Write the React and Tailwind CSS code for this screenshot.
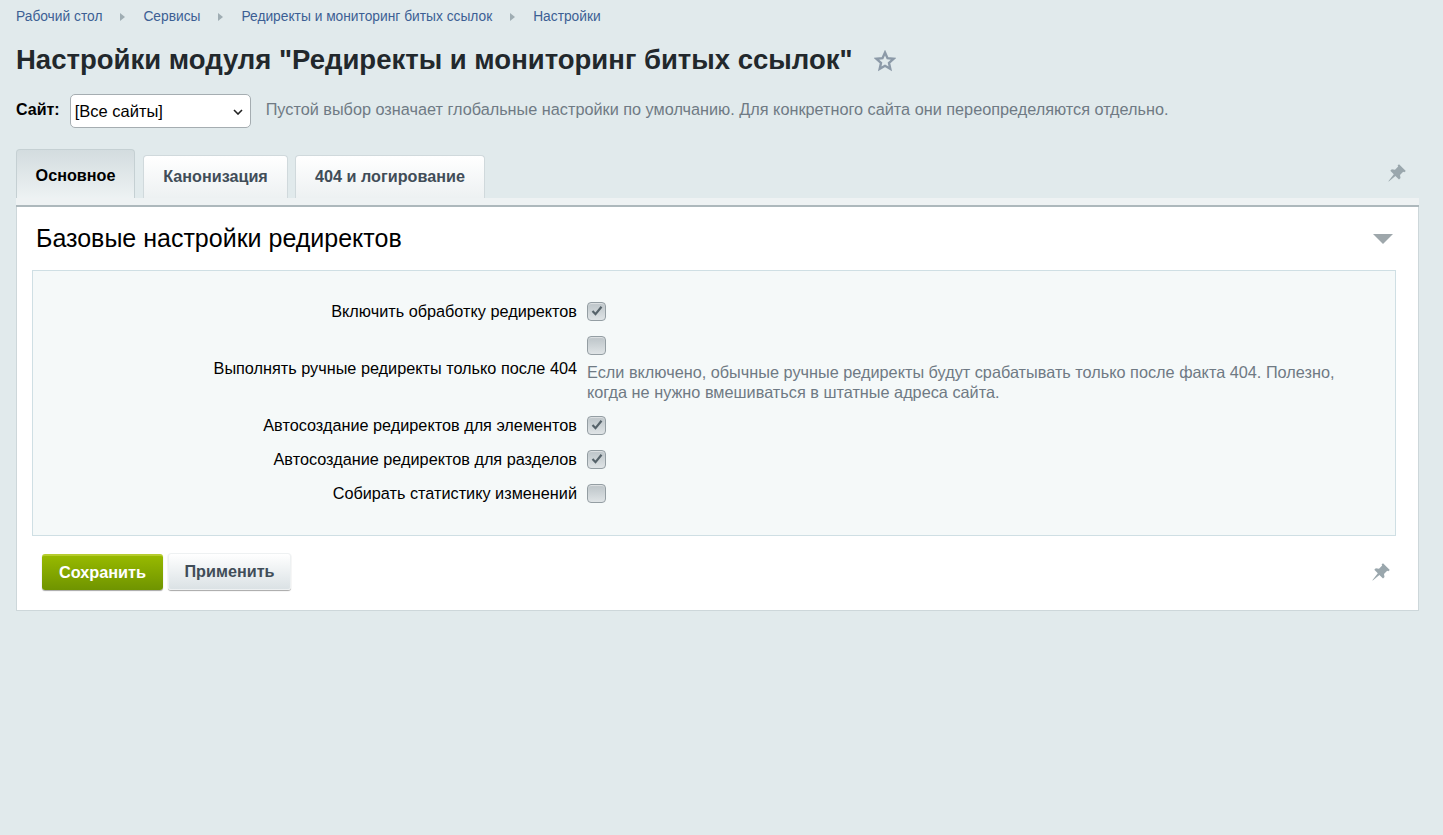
const FONT = "font-['Liberation_Sans',Arial,sans-serif]";

function Pin() {
  return (
    <svg width="20" height="20" viewBox="0 0 20 20" className="block">
      <path d="M12 1.2l6.8 6.8-1.5 1.3-1.1-.6-3.2 3.2.5 3.2-1.5 1.5-3.6-3.6L1.8 18.6l-.4-.4 5.4-7-3.5-3.5 1.5-1.5 3.2.5 3.2-3.2-.6-1.1z" fill="#9aa7ad" />
    </svg>
  );
}

function Checkbox({ checked }) {
  return (
    <span className="flex h-[19px] w-[19px] shrink-0 items-center justify-center rounded-[4px] border border-[#949ea3] bg-gradient-to-b from-[#bcc4c8] to-[#dfe4e6] shadow-[inset_0_1px_1px_rgba(255,255,255,0.5)]">
      {checked && (
        <svg width="14" height="14" viewBox="0 0 14 14">
          <path d="M2.5 7l3 3.2 6-7.4" fill="none" stroke="#56636a" strokeWidth="2.2" />
        </svg>
      )}
    </span>
  );
}

function Row({ label, checked, hint }) {
  return (
    <div className="flex items-center">
      <div className="w-[554px] pr-[10px] text-right text-[16.25px] leading-[18px] text-black">{label}</div>
      <div className="w-[770px] py-[7.5px]">
        <Checkbox checked={checked} />
        {hint && <div className="mt-[7px] -mb-[1px] text-[16.27px] leading-[20px] text-[#6f7a84]">{hint}</div>}
      </div>
    </div>
  );
}

function Tab({ active, width, children }) {
  if (active) {
    return (
      <div className={`flex h-[49px] items-center justify-center rounded-t-[4px] border border-b-0 border-[#c5d0d3] bg-gradient-to-b from-[#d3dcdf] to-[#edf2f3] pt-[2px] text-[16.2px] font-bold text-black ${width}`}>
        {children}
      </div>
    );
  }
  return (
    <div className={`flex h-[43px] items-center justify-center rounded-t-[4px] border border-b-0 border-[#d0d9dc] bg-gradient-to-b from-white to-[#edf1f2] pb-[1px] text-[16.2px] font-bold text-[#414d58] ${width}`}>
      {children}
    </div>
  );
}

export default function App() {
  const crumbs = ["Рабочий стол", "Сервисы", "Редиректы и мониторинг битых ссылок", "Настройки"];

  return (
    <div className={`${FONT} min-h-[835px] bg-[#e1eaec] pl-[16px] pr-[24px]`}>
      {/* breadcrumbs */}
      <div className="flex h-[33px] items-center pt-[1px] text-[13.77px] text-[#3c5f94]">
        {crumbs.map((c, i) => (
          <div key={c} className="flex items-center">
            {i > 0 && <span className="mx-[18px] h-0 w-0 border-y-[4px] border-l-[5px] border-y-transparent border-l-[#9fadb3]" />}
            <span>{c}</span>
          </div>
        ))}
      </div>

      {/* title */}
      <div className="mt-[8px] flex h-[38px] items-center">
        <h1 className="text-[27.5px] leading-[38px] font-bold text-[#22282c]">
          Настройки модуля "Редиректы и мониторинг битых ссылок"
        </h1>
        <svg width="22" height="22" viewBox="0 0 22 22" className="ml-[21px] mt-[2px]">
          <path d="M11 2.6l2.5 5.6 6.1.6-4.6 4.1 1.3 6-5.3-3.1-5.3 3.1 1.3-6-4.6-4.1 6.1-.6z" fill="none" stroke="#8c9aa8" strokeWidth="2.4" />
        </svg>
      </div>

      {/* site select */}
      <div className="mt-[15px] flex h-[34px] items-center">
        <span className="pb-[2px] text-[16px] font-bold text-black">Сайт:</span>
        <div className="relative ml-[10px] flex h-[34px] w-[181px] items-center rounded-[5px] border border-[#a5adb1] bg-white pl-[4px] text-[16.5px] text-black">
          [Все сайты]
          <svg width="10" height="6" viewBox="0 0 10 6" className="absolute right-[7px] top-[14px]">
            <path d="M1 1l4 4 4-4" fill="none" stroke="#222" strokeWidth="1.6" />
          </svg>
        </div>
        <span className="ml-[15px] pb-[3px] text-[16.25px] text-[#6f7a84]">
          Пустой выбор означает глобальные настройки по умолчанию. Для конкретного сайта они переопределяются отдельно.
        </span>
      </div>

      {/* tabs */}
      <div className="mt-[21px] flex items-end justify-between">
        <div className="flex items-end">
          <Tab active width="w-[119px]">Основное</Tab>
          <div className="w-[8px]" />
          <Tab width="w-[145px]">Канонизация</Tab>
          <div className="w-[7px]" />
          <Tab width="w-[190px]">404 и логирование</Tab>
        </div>
        <div className="mb-[15px] mr-[12px]"><Pin /></div>
      </div>

      <div className="h-[9px] border-b-2 border-[#adb8bc] bg-[#eef2f3]" />

      {/* panel */}
      <div className="border-x border-b border-[#cdd7da] bg-white pl-[15px] pr-[22px] pb-[20px]">
        <div className="flex h-[63px] items-center justify-between pl-[4px] pr-[3px]">
          <h2 className="text-[25px] font-normal text-black">Базовые настройки редиректов</h2>
          <span className="h-0 w-0 border-x-[10px] border-t-[10px] border-x-transparent border-t-[#9ea7ab]" />
        </div>

        <div className="border border-[#cfdfe4] bg-[#f5f9f9] pt-[23px] pb-[25px]">
          <Row label="Включить обработку редиректов" checked />
          <Row
            label="Выполнять ручные редиректы только после 404"
            hint={
              <>
                Если включено, обычные ручные редиректы будут срабатывать только после факта 404. Полезно,
                <br />
                когда не нужно вмешиваться в штатные адреса сайта.
              </>
            }
          />
          <Row label="Автосоздание редиректов для элементов" checked />
          <Row label="Автосоздание редиректов для разделов" checked />
          <Row label="Собирать статистику изменений" />
        </div>

        <div className="mt-[17px] flex items-center justify-between pl-[10px] pr-[5px]">
          <div className="flex items-center gap-[5px]">
            <button className="h-[36px] w-[121px] rounded-[3px] border-t-2 border-[#b6cc2e] bg-gradient-to-b from-[#97b900] to-[#6f9400] text-[16.3px] font-bold text-white shadow-[0_1px_1px_rgba(0,0,0,0.35)]">
              Сохранить
            </button>
            <button className="h-[37px] w-[123px] rounded-[3px] border border-[#eef1f2] bg-gradient-to-b from-white to-[#dbe2e5] text-[16.2px] font-bold text-[#414d58] shadow-[0_1px_1px_rgba(0,0,0,0.35)]">
              Применить
            </button>
          </div>
          <div className="mt-[1px]"><Pin /></div>
        </div>
      </div>
    </div>
  );
}
